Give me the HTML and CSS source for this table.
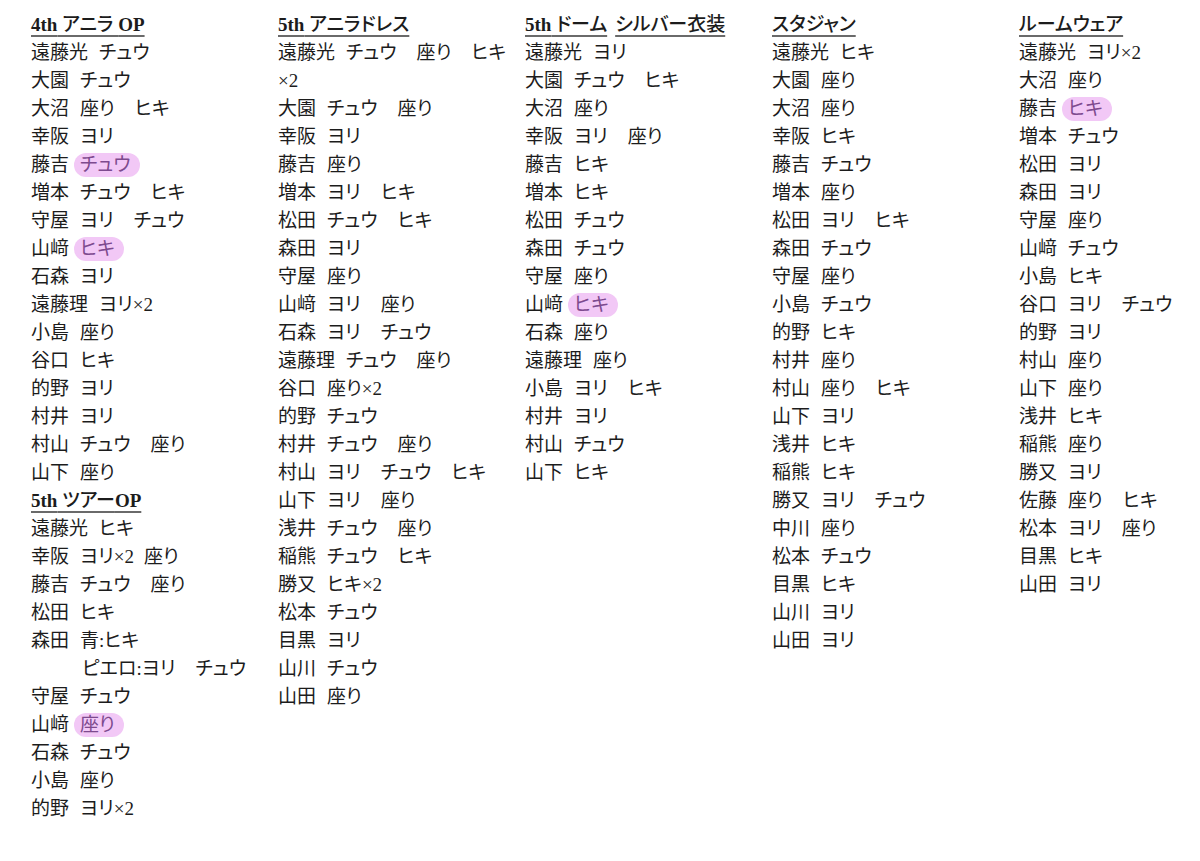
FILE: index.html
```html
<!DOCTYPE html>
<html lang="ja">
<head>
<meta charset="utf-8">
<title>衣装リスト</title>
<link rel="stylesheet" href="styles.css">
</head>
<body>
<main class="sheet">
  <section class="col">
    <div class="group">
      <h2 class="hd"><span class="lt">4th</span> アニラ <span class="lt">OP</span></h2>
      <div class="r"><span class="n">遠藤光</span><span class="v">チュウ</span></div>
      <div class="r"><span class="n">大園</span><span class="v">チュウ</span></div>
      <div class="r"><span class="n">大沼</span><span class="v">座り</span><span class="v">ヒキ</span></div>
      <div class="r"><span class="n">幸阪</span><span class="v">ヨリ</span></div>
      <div class="r"><span class="n">藤吉</span><span class="v hl">チュウ</span></div>
      <div class="r"><span class="n">増本</span><span class="v">チュウ</span><span class="v">ヒキ</span></div>
      <div class="r"><span class="n">守屋</span><span class="v">ヨリ</span><span class="v">チュウ</span></div>
      <div class="r"><span class="n">山﨑</span><span class="v hl">ヒキ</span></div>
      <div class="r"><span class="n">石森</span><span class="v">ヨリ</span></div>
      <div class="r"><span class="n">遠藤理</span><span class="v">ヨリ×2</span></div>
      <div class="r"><span class="n">小島</span><span class="v">座り</span></div>
      <div class="r"><span class="n">谷口</span><span class="v">ヒキ</span></div>
      <div class="r"><span class="n">的野</span><span class="v">ヨリ</span></div>
      <div class="r"><span class="n">村井</span><span class="v">ヨリ</span></div>
      <div class="r"><span class="n">村山</span><span class="v">チュウ</span><span class="v">座り</span></div>
      <div class="r"><span class="n">山下</span><span class="v">座り</span></div>
    </div>
    <div class="group">
      <h2 class="hd"><span class="lt">5th</span> ツアー<span class="lt">OP</span></h2>
      <div class="r"><span class="n">遠藤光</span><span class="v">ヒキ</span></div>
      <div class="r"><span class="n">幸阪</span><span class="v">ヨリ×2</span><span class="v s">座り</span></div>
      <div class="r"><span class="n">藤吉</span><span class="v">チュウ</span><span class="v">座り</span></div>
      <div class="r"><span class="n">松田</span><span class="v">ヒキ</span></div>
      <div class="r"><span class="n">森田</span><span class="v">青:ヒキ</span></div>
      <div class="r sub"><span class="v">ピエロ:ヨリ</span><span class="v">チュウ</span></div>
      <div class="r"><span class="n">守屋</span><span class="v">チュウ</span></div>
      <div class="r"><span class="n">山﨑</span><span class="v hl">座り</span></div>
      <div class="r"><span class="n">石森</span><span class="v">チュウ</span></div>
      <div class="r"><span class="n">小島</span><span class="v">座り</span></div>
      <div class="r"><span class="n">的野</span><span class="v">ヨリ×2</span></div>
    </div>
  </section>

  <section class="col">
    <div class="group">
      <h2 class="hd"><span class="lt">5th</span> アニラドレス</h2>
      <div class="r"><span class="n">遠藤光</span><span class="v">チュウ</span><span class="v">座り</span><span class="v">ヒキ</span></div>
      <div class="r"><span class="c">×2</span></div>
      <div class="r"><span class="n">大園</span><span class="v">チュウ</span><span class="v">座り</span></div>
      <div class="r"><span class="n">幸阪</span><span class="v">ヨリ</span></div>
      <div class="r"><span class="n">藤吉</span><span class="v">座り</span></div>
      <div class="r"><span class="n">増本</span><span class="v">ヨリ</span><span class="v">ヒキ</span></div>
      <div class="r"><span class="n">松田</span><span class="v">チュウ</span><span class="v">ヒキ</span></div>
      <div class="r"><span class="n">森田</span><span class="v">ヨリ</span></div>
      <div class="r"><span class="n">守屋</span><span class="v">座り</span></div>
      <div class="r"><span class="n">山﨑</span><span class="v">ヨリ</span><span class="v">座り</span></div>
      <div class="r"><span class="n">石森</span><span class="v">ヨリ</span><span class="v">チュウ</span></div>
      <div class="r"><span class="n">遠藤理</span><span class="v">チュウ</span><span class="v">座り</span></div>
      <div class="r"><span class="n">谷口</span><span class="v">座り×2</span></div>
      <div class="r"><span class="n">的野</span><span class="v">チュウ</span></div>
      <div class="r"><span class="n">村井</span><span class="v">チュウ</span><span class="v">座り</span></div>
      <div class="r"><span class="n">村山</span><span class="v">ヨリ</span><span class="v">チュウ</span><span class="v">ヒキ</span></div>
      <div class="r"><span class="n">山下</span><span class="v">ヨリ</span><span class="v">座り</span></div>
      <div class="r"><span class="n">浅井</span><span class="v">チュウ</span><span class="v">座り</span></div>
      <div class="r"><span class="n">稲熊</span><span class="v">チュウ</span><span class="v">ヒキ</span></div>
      <div class="r"><span class="n">勝又</span><span class="v">ヒキ×2</span></div>
      <div class="r"><span class="n">松本</span><span class="v">チュウ</span></div>
      <div class="r"><span class="n">目黒</span><span class="v">ヨリ</span></div>
      <div class="r"><span class="n">山川</span><span class="v">チュウ</span></div>
      <div class="r"><span class="n">山田</span><span class="v">座り</span></div>
    </div>
  </section>

  <section class="col">
    <div class="group">
      <h2 class="hd"><span class="lt">5th</span> ドーム<span class="wide">シルバー衣装</span></h2>
      <div class="r"><span class="n">遠藤光</span><span class="v">ヨリ</span></div>
      <div class="r"><span class="n">大園</span><span class="v">チュウ</span><span class="v">ヒキ</span></div>
      <div class="r"><span class="n">大沼</span><span class="v">座り</span></div>
      <div class="r"><span class="n">幸阪</span><span class="v">ヨリ</span><span class="v">座り</span></div>
      <div class="r"><span class="n">藤吉</span><span class="v">ヒキ</span></div>
      <div class="r"><span class="n">増本</span><span class="v">ヒキ</span></div>
      <div class="r"><span class="n">松田</span><span class="v">チュウ</span></div>
      <div class="r"><span class="n">森田</span><span class="v">チュウ</span></div>
      <div class="r"><span class="n">守屋</span><span class="v">座り</span></div>
      <div class="r"><span class="n">山﨑</span><span class="v hl">ヒキ</span></div>
      <div class="r"><span class="n">石森</span><span class="v">座り</span></div>
      <div class="r"><span class="n">遠藤理</span><span class="v">座り</span></div>
      <div class="r"><span class="n">小島</span><span class="v">ヨリ</span><span class="v">ヒキ</span></div>
      <div class="r"><span class="n">村井</span><span class="v">ヨリ</span></div>
      <div class="r"><span class="n">村山</span><span class="v">チュウ</span></div>
      <div class="r"><span class="n">山下</span><span class="v">ヒキ</span></div>
    </div>
  </section>

  <section class="col">
    <div class="group">
      <h2 class="hd">スタジャン</h2>
      <div class="r"><span class="n">遠藤光</span><span class="v">ヒキ</span></div>
      <div class="r"><span class="n">大園</span><span class="v">座り</span></div>
      <div class="r"><span class="n">大沼</span><span class="v">座り</span></div>
      <div class="r"><span class="n">幸阪</span><span class="v">ヒキ</span></div>
      <div class="r"><span class="n">藤吉</span><span class="v">チュウ</span></div>
      <div class="r"><span class="n">増本</span><span class="v">座り</span></div>
      <div class="r"><span class="n">松田</span><span class="v">ヨリ</span><span class="v">ヒキ</span></div>
      <div class="r"><span class="n">森田</span><span class="v">チュウ</span></div>
      <div class="r"><span class="n">守屋</span><span class="v">座り</span></div>
      <div class="r"><span class="n">小島</span><span class="v">チュウ</span></div>
      <div class="r"><span class="n">的野</span><span class="v">ヒキ</span></div>
      <div class="r"><span class="n">村井</span><span class="v">座り</span></div>
      <div class="r"><span class="n">村山</span><span class="v">座り</span><span class="v">ヒキ</span></div>
      <div class="r"><span class="n">山下</span><span class="v">ヨリ</span></div>
      <div class="r"><span class="n">浅井</span><span class="v">ヒキ</span></div>
      <div class="r"><span class="n">稲熊</span><span class="v">ヒキ</span></div>
      <div class="r"><span class="n">勝又</span><span class="v">ヨリ</span><span class="v">チュウ</span></div>
      <div class="r"><span class="n">中川</span><span class="v">座り</span></div>
      <div class="r"><span class="n">松本</span><span class="v">チュウ</span></div>
      <div class="r"><span class="n">目黒</span><span class="v">ヒキ</span></div>
      <div class="r"><span class="n">山川</span><span class="v">ヨリ</span></div>
      <div class="r"><span class="n">山田</span><span class="v">ヨリ</span></div>
    </div>
  </section>

  <section class="col">
    <div class="group">
      <h2 class="hd">ルームウェア</h2>
      <div class="r"><span class="n">遠藤光</span><span class="v">ヨリ×2</span></div>
      <div class="r"><span class="n">大沼</span><span class="v">座り</span></div>
      <div class="r"><span class="n">藤吉</span><span class="v hl">ヒキ</span></div>
      <div class="r"><span class="n">増本</span><span class="v">チュウ</span></div>
      <div class="r"><span class="n">松田</span><span class="v">ヨリ</span></div>
      <div class="r"><span class="n">森田</span><span class="v">ヨリ</span></div>
      <div class="r"><span class="n">守屋</span><span class="v">座り</span></div>
      <div class="r"><span class="n">山﨑</span><span class="v">チュウ</span></div>
      <div class="r"><span class="n">小島</span><span class="v">ヒキ</span></div>
      <div class="r"><span class="n">谷口</span><span class="v">ヨリ</span><span class="v">チュウ</span></div>
      <div class="r"><span class="n">的野</span><span class="v">ヨリ</span></div>
      <div class="r"><span class="n">村山</span><span class="v">座り</span></div>
      <div class="r"><span class="n">山下</span><span class="v">座り</span></div>
      <div class="r"><span class="n">浅井</span><span class="v">ヒキ</span></div>
      <div class="r"><span class="n">稲熊</span><span class="v">座り</span></div>
      <div class="r"><span class="n">勝又</span><span class="v">ヨリ</span></div>
      <div class="r"><span class="n">佐藤</span><span class="v">座り</span><span class="v">ヒキ</span></div>
      <div class="r"><span class="n">松本</span><span class="v">ヨリ</span><span class="v">座り</span></div>
      <div class="r"><span class="n">目黒</span><span class="v">ヒキ</span></div>
      <div class="r"><span class="n">山田</span><span class="v">ヨリ</span></div>
    </div>
  </section>
</main>
</body>
</html>
```
FILE: styles.css
```css
html, body {
  margin: 0;
  padding: 0;
  background: #ffffff;
}

body {
  font-family: "Liberation Serif", "Noto Sans CJK JP", serif;
  font-size: 19px;
  color: #1c1c1c;
  font-feature-settings: "palt";
}

.sheet {
  display: grid;
  grid-template-columns: repeat(4, 215px) 1fr;
  column-gap: 32px;
  padding: 11px 0 0 31px;
  align-items: start;
}

.col {
  display: flex;
  flex-direction: column;
}

.hd {
  margin: 0;
  font-size: 19px;
  font-weight: 500;
  line-height: 28px;
  height: 28px;
  white-space: nowrap;
  align-self: flex-start;
  text-decoration: underline;
  text-decoration-color: #6a6a6a;
  text-decoration-thickness: 2px;
  text-underline-offset: 4px;
}

.hd .lt {
  font-weight: 700;
}

.hd .wide {
  margin-left: 8px;
}

.r {
  line-height: 28px;
  height: 28px;
  white-space: nowrap;
}

.r.sub {
  padding-left: 40px;
}

.v {
  margin-left: 11px;
}

.v + .v {
  margin-left: 20px;
}

.v + .v.s {
  margin-left: 10px;
}

.hl {
  display: inline-block;
  line-height: 24px;
  background: #f2c8f6;
  color: #7d4a8e;
  border-radius: 12px;
  padding: 0 9px 0 6px;
  margin-left: 5px;
  margin-right: -9px;
}
```
